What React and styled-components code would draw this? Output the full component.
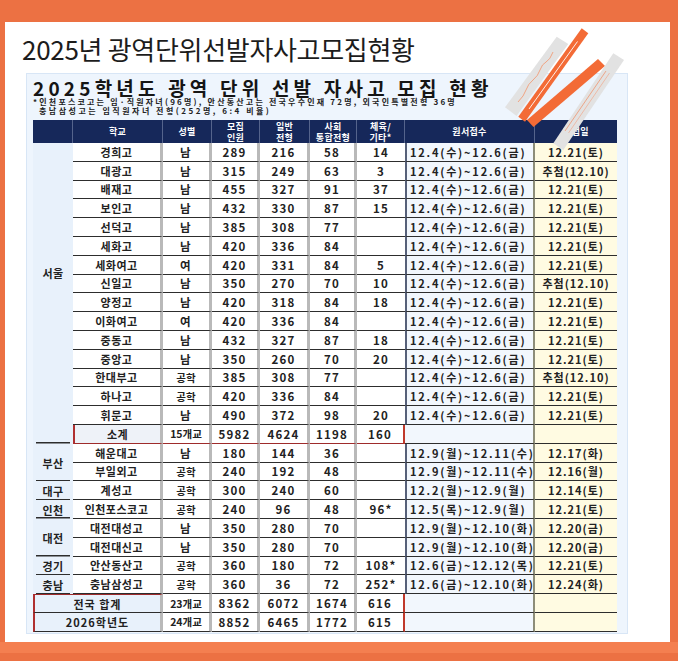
import React from 'react';
import styled, { createGlobalStyle } from 'styled-components';

const GlobalStyle = createGlobalStyle`
  html, body { margin: 0; padding: 0; }
  body {
    background: #ec7143;
    font-family: "Noto Sans CJK KR", "Noto Sans", sans-serif;
  }
`;

const Frame = styled.div`
  position: relative;
  width: 678px;
  height: 661px;
  box-sizing: border-box;
  padding: 22px 8px 19px 5px;
  background: linear-gradient(
    to bottom,
    #ec7143 0,
    #ec7143 642px,
    #f47f50 642px,
    #f47f50 653px,
    #ec7143 653px
  );
`;

const Card = styled.div`
  height: 100%;
  box-sizing: border-box;
  background: #fff;
  padding: 9px 0 0 17px;
  display: flex;
  flex-direction: column;
`;

const Heading = styled.h1`
  margin: 0;
  font-size: 26px;
  line-height: 36px;
  font-weight: 400;
  color: #1c1c1c;
  letter-spacing: -0.3px;
`;

const Panel = styled.section`
  margin: 6px 0 0 4px;
  width: 602px;
  height: 561px;
  box-sizing: border-box;
  background: #eef5fd;
  border: 1px solid #d8e6f6;
  padding: 5px 10px 0 6px;
  display: flex;
  flex-direction: column;
`;

const PanelTitle = styled.h2`
  margin: 0;
  font-size: 19px;
  line-height: 17px;
  font-weight: 700;
  color: #151515;
  letter-spacing: 4.2px;
  white-space: nowrap;
`;

const Notes = styled.p`
  margin: 1px 0 0;
  font-size: 8px;
  line-height: 9px;
  font-weight: 700;
  color: #222;
  white-space: nowrap;
`;

const NoteLine = styled.span`
  display: block;
  padding-left: ${(p) => p.$indent || 0}px;
  letter-spacing: ${(p) => p.$spacing}px;
`;

const Grid = styled.div`
  margin-top: 5px;
  display: grid;
  grid-template-columns: 40px 90px 49px 48px 50px 47px 48px 130px 82px;
  grid-template-rows: 23px repeat(26, 18.8px);
  background: #fff;
  color: #222;
  font-weight: 700;
`;

const Head = styled.div`
  background: #16285a;
  color: #fff;
  display: flex;
  align-items: center;
  justify-content: center;
  text-align: center;
  font-size: 9px;
  line-height: 11px;
  letter-spacing: 0.3px;
  box-sizing: border-box;
  border-right: ${(p) => (p.$last ? 'none' : '1px solid #55648c')};
`;

const Region = styled.div`
  grid-row: span ${(p) => p.$span};
  display: flex;
  align-items: center;
  justify-content: center;
  box-sizing: border-box;
  padding-bottom: ${(p) => p.$lift || 0}px;
  font-size: 11px;
  letter-spacing: 0.5px;
  background: linear-gradient(#2d2d2d, #2d2d2d) no-repeat center bottom / 34px 1.5px,
    #e8f1fb;
`;

const Base = styled.div`
  display: flex;
  align-items: center;
  justify-content: center;
  box-sizing: border-box;
  white-space: nowrap;
  border-bottom: 1.5px solid ${(p) => (p.$red ? '#9e2b2b' : '#2d2d2d')};
  overflow: hidden;
`;

const Name = styled(Base)`
  background: ${(p) => (p.$sub ? '#eef2f8' : '#fff')};
  border-right: 3px solid #b9b9b9;
  border-left: ${(p) => (p.$sub ? '2px solid #b03030' : 'none')};
  font-size: 11px;
  letter-spacing: 0.5px;
`;

const Num = styled(Base)`
  background: #fff;
  border-right: ${(p) =>
    p.$end ? (p.$redEnd ? '2px solid #c0392b' : 'none') : '3px solid #b9b9b9'};
  font-size: ${(p) => (p.$small ? 10.5 : 11.5)}px;
  letter-spacing: ${(p) => (p.$small ? 0 : 1.2)}px;
`;

const DateCell = styled(Base)`
  justify-content: flex-start;
  padding-left: 3px;
  background: #f2f7fd;
  border-left: ${(p) => (p.$redLeft ? 'none' : '2px solid #566079')};
  border-right: 2px solid #8d8d78;
  font-size: 11px;
  letter-spacing: 1.8px;
`;

const Result = styled(Base)`
  background: #fffbe2;
  font-size: 11px;
  letter-spacing: 1px;
`;

const TotalLabel = styled(Base)`
  grid-column: span 2;
  background: #e8f1fb;
  border-left: 2px solid #b03030;
  border-top: ${(p) => (p.$first ? '1.5px solid #9e2b2b' : 'none')};
  border-right: 3px solid #b9b9b9;
  font-size: 11px;
  letter-spacing: 1px;
`;

const Decoration = styled.svg`
  position: absolute;
  left: 495px;
  top: 25px;
  width: 140px;
  height: 130px;
  pointer-events: none;
`;

const SEOUL_DATE = '12.4(수)~12.6(금)';

const seoul = [
  ['경희고', '남', '289', '216', '58', '14', '12.21(토)'],
  ['대광고', '남', '315', '249', '63', '3', '추첨(12.10)'],
  ['배재고', '남', '455', '327', '91', '37', '12.21(토)'],
  ['보인고', '남', '432', '330', '87', '15', '12.21(토)'],
  ['선덕고', '남', '385', '308', '77', '', '12.21(토)'],
  ['세화고', '남', '420', '336', '84', '', '12.21(토)'],
  ['세화여고', '여', '420', '331', '84', '5', '12.21(토)'],
  ['신일고', '남', '350', '270', '70', '10', '추첨(12.10)'],
  ['양정고', '남', '420', '318', '84', '18', '12.21(토)'],
  ['이화여고', '여', '420', '336', '84', '', '12.21(토)'],
  ['중동고', '남', '432', '327', '87', '18', '12.21(토)'],
  ['중앙고', '남', '350', '260', '70', '20', '12.21(토)'],
  ['한대부고', '공학', '385', '308', '77', '', '추첨(12.10)'],
  ['하나고', '공학', '420', '336', '84', '', '12.21(토)'],
  ['휘문고', '남', '490', '372', '98', '20', '12.21(토)'],
].map(([name, sex, a, b, c, d, res]) => ({ name, sex, a, b, c, d, date: SEOUL_DATE, res }));

const others = [
  {
    region: '부산',
    rows: [
      { name: '해운대고', sex: '남', a: '180', b: '144', c: '36', d: '', date: '12.9(월)~12.11(수)', res: '12.17(화)' },
      { name: '부일외고', sex: '공학', a: '240', b: '192', c: '48', d: '', date: '12.9(월)~12.11(수)', res: '12.16(월)' },
    ],
  },
  {
    region: '대구',
    rows: [{ name: '계성고', sex: '공학', a: '300', b: '240', c: '60', d: '', date: '12.2(월)~12.9(월)', res: '12.14(토)' }],
  },
  {
    region: '인천',
    rows: [{ name: '인천포스코고', sex: '공학', a: '240', b: '96', c: '48', d: '96*', date: '12.5(목)~12.9(월)', res: '12.21(토)' }],
  },
  {
    region: '대전',
    rows: [
      { name: '대전대성고', sex: '남', a: '350', b: '280', c: '70', d: '', date: '12.9(월)~12.10(화)', res: '12.20(금)' },
      { name: '대전대신고', sex: '남', a: '350', b: '280', c: '70', d: '', date: '12.9(월)~12.10(화)', res: '12.20(금)' },
    ],
  },
  {
    region: '경기',
    rows: [{ name: '안산동산고', sex: '공학', a: '360', b: '180', c: '72', d: '108*', date: '12.6(금)~12.12(목)', res: '12.21(토)' }],
  },
  {
    region: '충남',
    rows: [{ name: '충남삼성고', sex: '공학', a: '360', b: '36', c: '72', d: '252*', date: '12.6(금)~12.10(화)', res: '12.24(화)' }],
  },
];

const totals = [
  { label: '전국 합계', n: '23개교', a: '8362', b: '6072', c: '1674', d: '616' },
  { label: '2026학년도', n: '24개교', a: '8852', b: '6465', c: '1772', d: '615' },
];

function DataRow({ r }) {
  return (
    <>
      <Name>{r.name}</Name>
      <Num $small={r.sex.length > 1}>{r.sex}</Num>
      <Num>{r.a}</Num>
      <Num>{r.b}</Num>
      <Num>{r.c}</Num>
      <Num $end>{r.d}</Num>
      <DateCell>{r.date}</DateCell>
      <Result>{r.res}</Result>
    </>
  );
}

export default function App() {
  return (
    <>
      <GlobalStyle />
      <Frame>
        <Card>
          <Heading>2025년 광역단위선발자사고모집현황</Heading>
          <Panel>
            <PanelTitle>2025학년도 광역 단위 선발 자사고 모집 현황</PanelTitle>
            <Notes>
              <NoteLine $spacing={2.2}>
                *인천포스코고는 임·직원자녀(96명), 안산동산고는 전국우수인재 72명, 외국인특별전형 36명
              </NoteLine>
              <NoteLine $indent={6} $spacing={2.5}>
                충남삼성고는 임직원자녀 전형(252명, 6:4 비율)
              </NoteLine>
            </Notes>
            <Grid>
              <Head />
              <Head>학교</Head>
              <Head>성별</Head>
              <Head>
                모집
                <br />
                인원
              </Head>
              <Head>
                일반
                <br />
                전형
              </Head>
              <Head>
                사회
                <br />
                통합전형
              </Head>
              <Head>
                체육/
                <br />
                기타*
              </Head>
              <Head>원서접수</Head>
              <Head $last>면접일</Head>

              <Region $span={16} $lift={40}>서울</Region>
              {seoul.map((r) => (
                <DataRow key={r.name} r={r} />
              ))}
              <Name $sub $red>소계</Name>
              <Num $small $red>15개교</Num>
              <Num $red>5982</Num>
              <Num $red>4624</Num>
              <Num $red>1198</Num>
              <Num $red $end $redEnd>160</Num>
              <DateCell $redLeft />
              <Result />

              {others.map((g) => (
                <React.Fragment key={g.region}>
                  <Region $span={g.rows.length}>{g.region}</Region>
                  {g.rows.map((r) => (
                    <DataRow key={r.name} r={r} />
                  ))}
                </React.Fragment>
              ))}

              {totals.map((t, i) => (
                <React.Fragment key={t.label}>
                  <TotalLabel $first={i === 0}>{t.label}</TotalLabel>
                  <Num $small>{t.n}</Num>
                  <Num>{t.a}</Num>
                  <Num>{t.b}</Num>
                  <Num>{t.c}</Num>
                  <Num $end $redEnd>{t.d}</Num>
                  <DateCell $redLeft />
                  <Result />
                </React.Fragment>
              ))}
            </Grid>
          </Panel>
        </Card>
        <Decoration viewBox="495 25 140 130">
          <polygon points="556.7,36.7 568.3,44 516.6,116 505,107.3" fill="#e2e2e2" />
          <path
            d="M518,102 Q524,96 526,90 T533,80 T540,70 T546,62 T553,52"
            fill="none"
            stroke="#f3936a"
            strokeWidth="0.8"
          />
          <polygon points="581.7,28.3 588.3,33.3 525,121.7 518.3,116.7" fill="#f36b36" />
          <line x1="529" y1="109" x2="577.5" y2="41.5" stroke="#ffffff" strokeWidth="0.9" />
          <polygon points="598,59 605,66 533.5,127 527,120" fill="#f36b36" />
          <polygon points="613.3,53.3 624,60 563.3,150 553.3,143.3" fill="#e2e2e2" />
          <line x1="565" y1="131" x2="606" y2="71" stroke="#f08a60" strokeWidth="0.7" />
          <line x1="568.5" y1="133" x2="609.5" y2="73" stroke="#f3a080" strokeWidth="0.6" />
        </Decoration>
      </Frame>
    </>
  );
}
